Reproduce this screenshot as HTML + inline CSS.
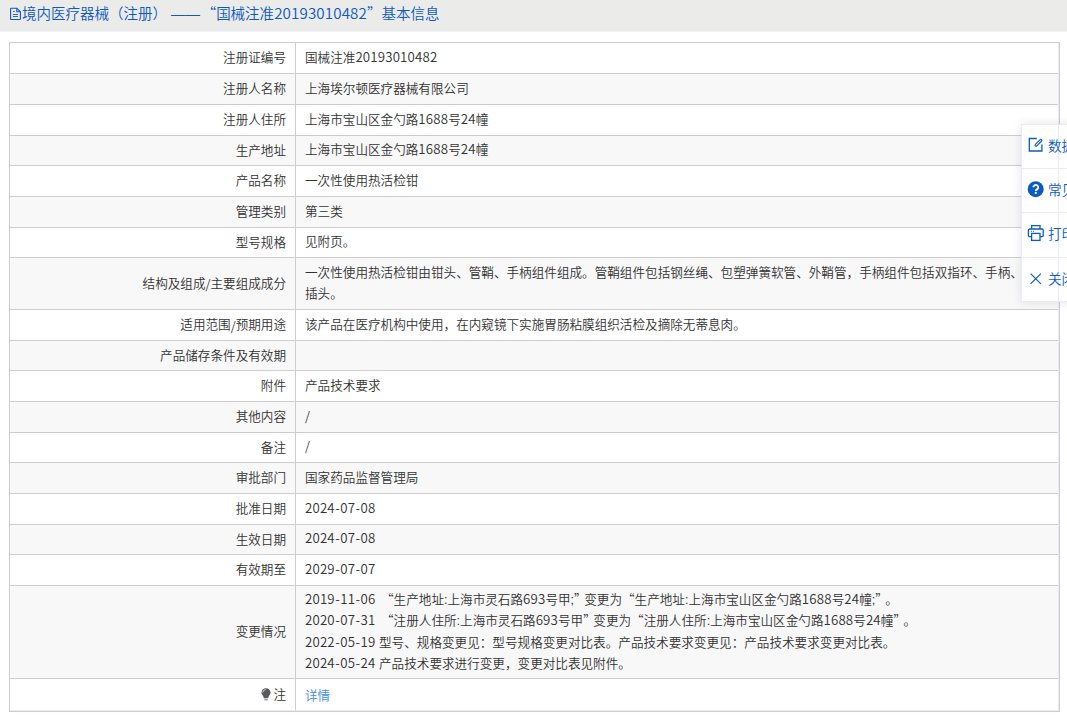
<!DOCTYPE html>
<html lang="zh-CN">
<head>
<meta charset="utf-8">
<title>境内医疗器械（注册）</title>
<style>
html,body{margin:0;padding:0;}
body{width:1067px;height:720px;overflow:hidden;background:#fff;position:relative;
  font-family:"Liberation Sans","Noto Sans CJK SC",sans-serif;font-size:12.6px;font-weight:350;color:#333;text-spacing-trim:space-all;}
.n{font-family:"Noto Sans CJK SC",sans-serif;font-size:13.25px;line-height:0;letter-spacing:.18px;}
.h{margin:0 .35px;}
.s{font-family:"Noto Sans CJK SC",sans-serif;line-height:0;}
.o{margin-left:2px;}
.c{margin-right:-2.5px;}
.q{font-family:"Noto Sans CJK SC",sans-serif;line-height:0;}
.hd{position:absolute;left:0;top:0;width:1067px;height:31px;background:#ebebea;border-bottom:1px solid #eef0fa;color:#0d59c0;
  font-size:14.5px;line-height:29px;}
.hd span.t{position:absolute;left:22px;top:0;white-space:nowrap;}
.hd svg{position:absolute;left:10px;top:7px;}
.tb{position:absolute;left:9px;top:42px;width:1049px;height:668px;border:1px solid #cfcdcd;}
.tb .in{position:absolute;left:0;top:0;right:0;bottom:0;border-right:1px solid #e8ebf7;border-bottom:1px solid #e8ebf7;}
.r{position:absolute;left:10px;width:1048px;line-height:21px;border-bottom:1px solid #cfcdcd;background:#fff;}
.r.e{background:#f8f8f8;}
.r.z{border-bottom:none;}
.r .l{position:absolute;left:0;top:0;bottom:0;width:285px;border-right:1px solid #cfcdcd;box-sizing:content-box;
  display:flex;align-items:center;justify-content:flex-end;padding-right:0;}
.r .l{width:276px;padding-right:9px;padding-top:1px;}
.r .v{position:absolute;left:286px;top:0;bottom:0;right:0;display:flex;align-items:center;padding-left:9px;padding-top:1px;line-height:21.2px;white-space:nowrap;}
a{color:#3b8cee;text-decoration:none;position:relative;top:1.5px;}
.bulb{margin-right:2.2px;margin-top:-2px;}
.fl{position:absolute;left:1021px;top:124px;width:120px;height:178px;background:#fff;border:1px solid #e9ebf6;box-sizing:border-box;
  box-shadow:0 0 10px rgba(0,0,0,.10);color:#0b5bc4;font-size:13.6px;}
.fl .hl{position:absolute;left:0;width:100%;height:1px;background:#e9ebf6;}
.fl .vl{position:absolute;left:36px;top:0;bottom:0;width:1px;background:#e9ebf6;}
.fl svg{position:absolute;}
.fl span{position:absolute;left:26px;margin-top:.4px;line-height:20px;white-space:nowrap;}
</style>
</head>
<body>
<div class="hd">
<svg width="11" height="14" viewBox="0 0 11 14" fill="none" stroke="#0d59c0" stroke-width="1.1"><g transform="translate(0 .6)"><path d="M1.2.6h5.6l3.6 3.6v7.1a.6.6 0 0 1-.6.6H1.2a.6.6 0 0 1-.6-.6V1.2a.6.6 0 0 1 .6-.6z"/><path d="M6.8.8v3.4h3.4"/><path d="M2.9 3.9h1.9M2.9 6.9h5.1M2.9 8.9h5.1" stroke-width=".9"/></g></svg>
<span class="t">境内医疗器械（注册） ——<span class="q" style="margin-left:1.6px">“</span>国械注准<span class="q" style="letter-spacing:.1px;font-size:15.2px">20193010482</span><span class="q">”</span>基本信息</span>
</div>
<div class="tb"><div class="in"></div></div>
<div class="r" style="top:43px;height:30px"><div class="l">注册证编号</div><div class="v"><div>国械注准<span class="n">20193010482</span></div></div></div>
<div class="r e" style="top:74px;height:30px"><div class="l">注册人名称</div><div class="v"><div>上海埃尔顿医疗器械有限公司</div></div></div>
<div class="r" style="top:105px;height:30px"><div class="l">注册人住所</div><div class="v"><div>上海市宝山区金勺路<span class="n">1688</span>号<span class="n">24</span>幢</div></div></div>
<div class="r e" style="top:136px;height:29px"><div class="l">生产地址</div><div class="v"><div>上海市宝山区金勺路<span class="n">1688</span>号<span class="n">24</span>幢</div></div></div>
<div class="r" style="top:166px;height:30px"><div class="l">产品名称</div><div class="v"><div>一次性使用热活检钳</div></div></div>
<div class="r e" style="top:197px;height:30px"><div class="l">管理类别</div><div class="v"><div>第三类</div></div></div>
<div class="r" style="top:228px;height:29px"><div class="l">型号规格</div><div class="v"><div>见附页。</div></div></div>
<div class="r e" style="top:258px;height:51px"><div class="l">结构及组成<span class="s">/</span>主要组成成分</div><div class="v"><div>一次性使用热活检钳由钳头、管鞘、手柄组件组成。管鞘组件包括钢丝绳、包塑弹簧软管、外鞘管，手柄组件包括双指环、手柄、<br>插头。</div></div></div>
<div class="r" style="top:310px;height:30px"><div class="l">适用范围<span class="s">/</span>预期用途</div><div class="v"><div>该产品在医疗机构中使用，在内窥镜下实施胃肠粘膜组织活检及摘除无蒂息肉。</div></div></div>
<div class="r e" style="top:341px;height:29px"><div class="l">产品储存条件及有效期</div><div class="v"><div></div></div></div>
<div class="r" style="top:371px;height:30px"><div class="l">附件</div><div class="v"><div>产品技术要求</div></div></div>
<div class="r e" style="top:402px;height:30px"><div class="l">其他内容</div><div class="v"><div><span class="s">/</span></div></div></div>
<div class="r" style="top:433px;height:29px"><div class="l">备注</div><div class="v"><div><span class="s">/</span></div></div></div>
<div class="r e" style="top:463px;height:30px"><div class="l">审批部门</div><div class="v"><div>国家药品监督管理局</div></div></div>
<div class="r" style="top:494px;height:30px"><div class="l">批准日期</div><div class="v"><div><span class="n">2024<span class="h">-</span>07<span class="h">-</span>08</span></div></div></div>
<div class="r e" style="top:525px;height:29px"><div class="l">生效日期</div><div class="v"><div><span class="n">2024<span class="h">-</span>07<span class="h">-</span>08</span></div></div></div>
<div class="r" style="top:555px;height:30px"><div class="l">有效期至</div><div class="v"><div><span class="n">2029<span class="h">-</span>07<span class="h">-</span>07</span></div></div></div>
<div class="r e" style="top:586px;height:92px"><div class="l">变更情况</div><div class="v"><div><span class="n">2019<span class="h">-</span>11<span class="h">-</span>06</span> <span class="q o">“</span>生产地址:上海市灵石路<span class="n">693</span>号甲;<span class="q c">”</span>变更为<span class="q">“</span>生产地址:上海市宝山区金勺路<span class="n">1688</span>号<span class="n">24</span>幢;<span class="q c">”</span>。<br><span class="n">2020<span class="h">-</span>07<span class="h">-</span>31</span> <span class="q o">“</span>注册人住所:上海市灵石路<span class="n">693</span>号甲<span class="q c">”</span>变更为<span class="q">“</span>注册人住所:上海市宝山区金勺路<span class="n">1688</span>号<span class="n">24</span>幢<span class="q c">”</span>。<br><span class="n">2022<span class="h">-</span>05<span class="h">-</span>19</span> 型号、规格变更见：型号规格变更对比表。产品技术要求变更见：产品技术要求变更对比表。<br><span class="n">2024<span class="h">-</span>05<span class="h">-</span>24</span> 产品技术要求进行变更，变更对比表见附件。</div></div></div>
<div class="r z" style="top:679px;height:31px"><div class="l"><svg class="bulb" width="10" height="13" viewBox="0 0 10 13"><path d="M5 .3C2.3 .3 .5 2.3 .5 4.6C.5 6.3 1.5 7.3 2.3 8.4L2.9 10.2H7.1L7.7 8.4C8.5 7.3 9.5 6.3 9.5 4.6C9.5 2.3 7.7 .3 5 .3z" fill="#5a5a5e"/><path d="M1.8 4.6A3.4 3.4 0 0 1 4.8 1.5" fill="none" stroke="#e8e8e8" stroke-width=".8"/><path d="M3.4 11.8h3.2" stroke="#5a5a5e" stroke-width=".9"/></svg>注</div><div class="v"><div><a>详情</a></div></div></div>
<div class="fl">
<div class="hl" style="top:43px"></div><div class="hl" style="top:87px"></div><div class="hl" style="top:132px"></div>
<div class="vl"></div>
<svg style="left:5px;top:11px" width="17" height="17" viewBox="0 0 17 17" fill="none" stroke="#0b5bc4" stroke-width="1.3"><path d="M9.8 2.5H2.3V15H14.9V8.6"/><path d="M8.39 8.39L13.19 3.59a1 1 0 0 1 1.42 1.42L9.81 9.81a1 1 0 0 1-1.42-1.42z" stroke-width="1.15"/></svg>
<svg style="left:5px;top:55px" width="18" height="18" viewBox="0 0 18 18"><circle cx="8.7" cy="9.2" r="8" fill="#0b5bc4"/><path d="M6.4 7.3a2.4 2.4 0 1 1 3.6 2.1c-.8.5-1.2.9-1.2 1.6" fill="none" stroke="#fff" stroke-width="1.9"/><circle cx="8.8" cy="12.9" r="1.15" fill="#fff"/></svg>
<svg style="left:5px;top:99px" width="18" height="18" viewBox="0 0 18 18" fill="none" stroke="#0b5bc4" stroke-width="1.3"><path d="M4.6 5V1.6h8.4V5"/><path d="M4.6 12.6H2.6a1.2 1.2 0 0 1 -1.2 -1.2V6.2a1.2 1.2 0 0 1 1.2 -1.2h12.4a1.2 1.2 0 0 1 1.2 1.2v5.2a1.2 1.2 0 0 1 -1.2 1.2H13"/><rect x="4.6" y="9.4" width="8.4" height="7"/><path d="M4 7.3h1M6 7.3h1" stroke-width="1"/></svg>
<svg style="left:7px;top:147px" width="14" height="14" viewBox="0 0 14 14" fill="none" stroke="#0b5bc4" stroke-width="1.2"><path d="M1.6 1.6L11.9 11.9M11.9 1.6L1.6 11.9"/></svg>
<span style="top:12px">数据</span>
<span style="top:56px">常见</span>
<span style="top:100px">打印</span>
<span style="top:145px">关闭</span>
</div>
</body>
</html>
